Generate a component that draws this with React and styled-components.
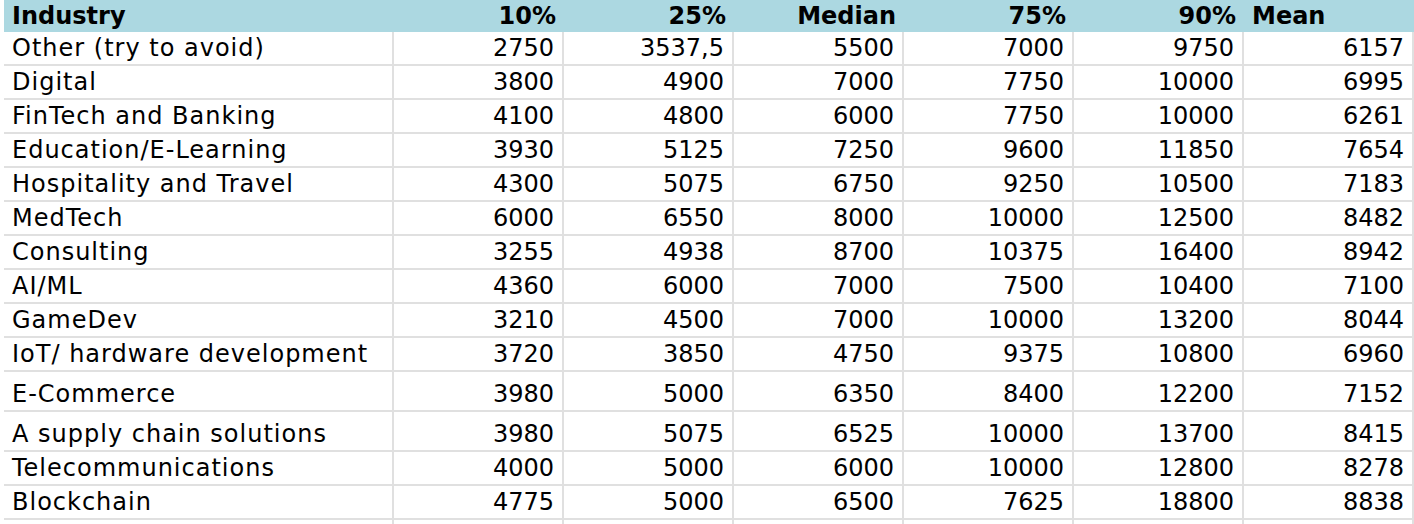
import styled, { createGlobalStyle } from 'styled-components';

const GlobalStyle = createGlobalStyle`
  html, body {
    margin: 0;
    padding: 0;
    background: #ffffff;
  }
  body {
    font-family: "DejaVu Sans", "Noto Sans", sans-serif;
    color: #000000;
  }
`;

const columns = ['Industry', '10%', '25%', 'Median', '75%', '90%', 'Mean'];

const rows = [
  { name: 'Other (try to avoid)', values: ['2750', '3537,5', '5500', '7000', '9750', '6157'] },
  { name: 'Digital', values: ['3800', '4900', '7000', '7750', '10000', '6995'] },
  { name: 'FinTech and Banking', values: ['4100', '4800', '6000', '7750', '10000', '6261'] },
  { name: 'Education/E-Learning', values: ['3930', '5125', '7250', '9600', '11850', '7654'] },
  { name: 'Hospitality and Travel', values: ['4300', '5075', '6750', '9250', '10500', '7183'] },
  { name: 'MedTech', values: ['6000', '6550', '8000', '10000', '12500', '8482'] },
  { name: 'Consulting', values: ['3255', '4938', '8700', '10375', '16400', '8942'] },
  { name: 'AI/ML', values: ['4360', '6000', '7000', '7500', '10400', '7100'] },
  { name: 'GameDev', values: ['3210', '4500', '7000', '10000', '13200', '8044'] },
  { name: 'IoT/ hardware development', values: ['3720', '3850', '4750', '9375', '10800', '6960'] },
  { name: 'E-Commerce', values: ['3980', '5000', '6350', '8400', '12200', '7152'], tall: true },
  { name: 'A supply chain solutions', values: ['3980', '5075', '6525', '10000', '13700', '8415'], tall: true },
  { name: 'Telecommunications', values: ['4000', '5000', '6000', '10000', '12800', '8278'] },
  { name: 'Blockchain', values: ['4775', '5000', '6500', '7625', '18800', '8838'] },
  { name: '', values: ['', '', '', '', '', ''] }
];

const App = () => {
  return (
    <>
      <GlobalStyle />
      <Sheet>
        <HeaderRow>
          {columns.map((c, i) => (
            <HeadCell key={c} $left={i === 0 || i === 6}>
              {c}
            </HeadCell>
          ))}
        </HeaderRow>
        {rows.map((r, idx) => (
          <Row key={`row${idx}`} $tall={r.tall}>
            <Cell $left>{r.name}</Cell>
            {r.values.map((v, i) => (
              <Cell key={`c${idx}-${i}`}>{v}</Cell>
            ))}
          </Row>
        ))}
      </Sheet>
    </>
  );
};

const Sheet = styled.div`
  width: 1414px;
  height: 524px;
  overflow: hidden;
  padding-left: 4px;
  box-sizing: border-box;
`;

const HeaderRow = styled.div`
  display: grid;
  grid-template-columns: 390px repeat(6, 170px);
  height: 32px;
  background-color: #acd8e1;
`;

const HeadCell = styled.div`
  display: flex;
  align-items: flex-end;
  justify-content: ${(p) => (p.$left ? 'flex-start' : 'flex-end')};
  padding: ${(p) => (p.$left ? '0 0 4px 8px' : '0 8px 4px 0')};
  font-size: 24px;
  font-weight: 700;
  line-height: 1;
  box-sizing: border-box;
`;

const Row = styled.div`
  display: grid;
  grid-template-columns: 390px repeat(6, 170px);
  height: ${(p) => (p.$tall ? '40px' : '34px')};
`;

const Cell = styled.div`
  display: flex;
  align-items: flex-end;
  justify-content: ${(p) => (p.$left ? 'flex-start' : 'flex-end')};
  padding: ${(p) => (p.$left ? '0 0 4px 8px' : '0 8px 4px 0')};
  border-right: 2px solid #e0e0e0;
  border-bottom: 2px solid #e0e0e0;
  font-size: 24px;
  letter-spacing: ${(p) => (p.$left ? '1px' : '0')};
  line-height: 1;
  white-space: nowrap;
  box-sizing: border-box;
`;

export default App;
